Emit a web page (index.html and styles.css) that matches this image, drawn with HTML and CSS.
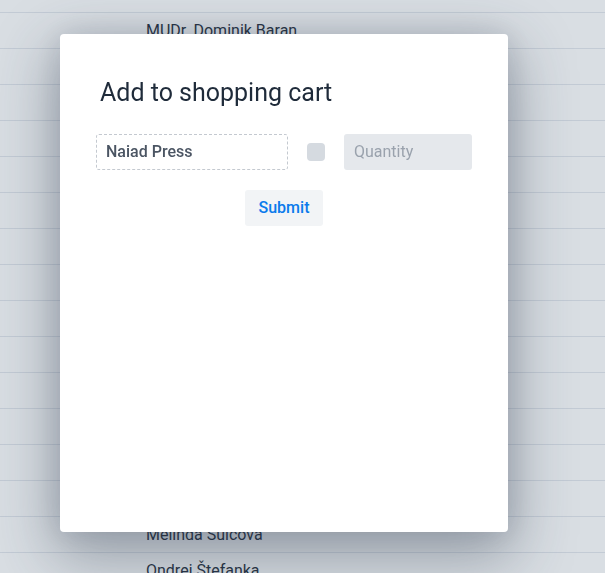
FILE: index.html
```html
<!DOCTYPE html>
<html lang="cs">
<head>
<meta charset="utf-8">
<title>Add to shopping cart</title>
<link rel="stylesheet" href="styles.css">
</head>
<body>
<ul class="people">
  <li class="row">MUDr. Dominik Baran</li>
  <li class="row">Ing. Petra Novotná</li>
  <li class="row">Jakub Dvořák</li>
  <li class="row">Tereza Kučerová</li>
  <li class="row">Martin Horák</li>
  <li class="row">Lucie Veselá</li>
  <li class="row">Bc. Tomáš Marek</li>
  <li class="row">Eva Pokorná</li>
  <li class="row">Jan Černý</li>
  <li class="row">Kateřina Svobodová</li>
  <li class="row">Pavel Král</li>
  <li class="row">Hana Procházková</li>
  <li class="row">Vojtěch Beneš</li>
  <li class="row">Adam Fiala</li>
  <li class="row">Melinda Šulcová</li>
  <li class="row">Ondrej Štefanka</li>
</ul>

<div class="modal">
  <h1 class="modal-title">Add to shopping cart</h1>
  <form class="cart-form">
    <div class="fields">
      <div class="publisher">Naiad Press</div>
      <span class="check"></span>
      <input class="qty" type="text" placeholder="Quantity">
    </div>
    <div class="actions">
      <button class="submit" type="button">Submit</button>
    </div>
  </form>
</div>
</body>
</html>
```

FILE: styles.css
```css
* { box-sizing: border-box; }

html, body {
  margin: 0;
  padding: 0;
  height: 100%;
  overflow: hidden;
}

body {
  background: #d9dee3;
  font-family: Roboto, "Liberation Sans", sans-serif;
  color: #283445;
}

.people {
  list-style: none;
  margin: 0;
  padding: 12px 0 0 0;
}

.row {
  height: 36px;
  border-top: 1px solid #c3cbd5;
  padding-left: 146px;
  font-size: 16px;
  line-height: 35px;
}

.modal {
  position: fixed;
  left: 60px;
  top: 34px;
  width: 448px;
  height: 498px;
  background: #ffffff;
  border-radius: 4px;
  padding: 43px 36px 36px;
  box-shadow: 0 20px 60px 6px rgba(40, 52, 72, 0.38), 0 0 30px rgba(40, 52, 72, 0.12);
}

.modal-title {
  margin: 0 0 25px 4px;
  font-size: 25px;
  line-height: 32px;
  font-weight: 400;
  color: #1f2b3a;
}

.cart-form {
  margin: 0;
}

.fields {
  display: flex;
  align-items: center;
  justify-content: space-between;
}

.publisher {
  width: 192px;
  height: 36px;
  border: 1px dashed #c4c9d0;
  border-radius: 3px;
  padding: 0 9px;
  font-size: 16px;
  line-height: 34px;
  font-weight: 500;
  color: #4b5563;
}

.check {
  width: 18px;
  height: 18px;
  border-radius: 4px;
  background: #d5dae0;
}

.qty {
  width: 128px;
  height: 36px;
  border: none;
  border-radius: 3px;
  background: #e5e8ec;
  padding: 0 10px 1px;
  font-family: Roboto, "Liberation Sans", sans-serif;
  font-size: 16px;
  color: #4b5563;
  outline: none;
}

.qty::placeholder {
  color: #9aa2ad;
}

.actions {
  display: flex;
  justify-content: center;
  margin-top: 20px;
}

.submit {
  height: 36px;
  padding: 0 14px 1px;
  border: none;
  border-radius: 3px;
  background: #f2f4f6;
  color: #0b7bec;
  font-family: Roboto, "Liberation Sans", sans-serif;
  font-size: 16px;
  font-weight: 500;
  cursor: pointer;
}
```
